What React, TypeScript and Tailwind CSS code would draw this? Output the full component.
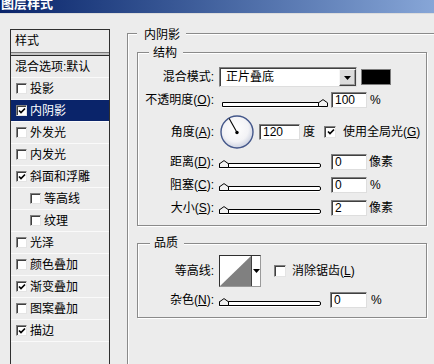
import React from "react";

function Check({ checked, small }: { checked?: boolean; small?: boolean }) {
  return (
    <span
      className={
        (small ? "w-[11px] h-[11px] " : "w-[12px] h-[12px] ") +
        "flex shrink-0 items-center justify-center bg-white border border-t-[#808080] border-l-[#808080] border-b-[#e4e4e4] border-r-[#e4e4e4] shadow-[inset_1px_1px_0_#404040]"
      }
    >
      {checked && (
        <svg width="8" height="8" viewBox="0 0 8 8" className="ml-[1px] mt-[1px]">
          <polyline points="1,3.5 3,5.5 7,1.5" fill="none" stroke="#000" strokeWidth="1.7" />
        </svg>
      )}
    </span>
  );
}

function Input({ value, w }: { value: string; w: "w36" | "w41" | "w37" }) {
  const wc = w === "w36" ? "w-[36px]" : w === "w41" ? "w-[41px]" : "w-[37px]";
  return (
    <div
      className={
        wc +
        " h-[16px] shrink-0 bg-white border border-t-[#808080] border-l-[#808080] border-b-[#dedede] border-r-[#dedede] shadow-[inset_1px_1px_0_#404040] pl-[3px] text-[12px] leading-[14px] text-black"
      }
    >
      {value}
    </div>
  );
}

function Thumb() {
  return (
    <svg width="10" height="8" viewBox="0 0 10 8">
      <path d="M0.5,7.5 L0.5,3.8 L5,0.6 L9.5,3.8 L9.5,7.5 Z" fill="#f2f2f2" stroke="#000" strokeWidth="1" />
    </svg>
  );
}

function Slider({ right }: { right?: boolean }) {
  if (right) {
    return (
      <div className="relative w-[106px] h-[10px] mt-[3px] shrink-0 flex items-end">
        <div className="w-[100px] h-[5px] border border-black bg-white rounded-r-[2px] shadow-[0_1px_0_#ffffff]" />
        <div className="absolute right-0 bottom-0 flex">
          <Thumb />
        </div>
      </div>
    );
  }
  return (
    <div className="relative w-[102px] h-[10px] mt-[3px] shrink-0 flex items-end">
      <div className="w-full h-[5px] border border-black bg-white rounded-r-[2px] shadow-[0_1px_0_#ffffff]" />
      <div className="absolute left-0 bottom-0 flex">
        <Thumb />
      </div>
    </div>
  );
}

function Label({ children }: { children: React.ReactNode }) {
  return (
    <div className="w-[76px] shrink-0 text-right whitespace-nowrap text-[12px] leading-[14px]">{children}</div>
  );
}

function U({ c }: { c: string }) {
  return <span className="underline underline-offset-[1px]">{c}</span>;
}

function Dial() {
  return (
    <svg width="34" height="34" viewBox="0 0 34 34" className="shrink-0">
      <defs>
        <radialGradient id="dialg" cx="45%" cy="40%" r="62%">
          <stop offset="0" stopColor="#ffffff" />
          <stop offset="0.65" stopColor="#f3f3f6" />
          <stop offset="1" stopColor="#c9cfdf" />
        </radialGradient>
      </defs>
      <circle cx="17" cy="17" r="16" fill="url(#dialg)" stroke="#44578a" strokeWidth="1.4" />
      <line x1="17" y1="17.5" x2="9.2" y2="3.5" stroke="#000" strokeWidth="1.1" />
      <circle cx="17" cy="17.5" r="1.7" fill="#000" />
    </svg>
  );
}

function DownTri() {
  return (
    <svg width="7" height="4" viewBox="0 0 7 4">
      <polygon points="0,0 7,0 3.5,4" fill="#000" />
    </svg>
  );
}

const listItems: { t: string; c?: boolean; ind?: boolean; sel?: boolean }[] = [
  { t: "投影" },
  { t: "内阴影", c: true, sel: true },
  { t: "外发光" },
  { t: "内发光" },
  { t: "斜面和浮雕", c: true },
  { t: "等高线", ind: true },
  { t: "纹理", ind: true },
  { t: "光泽" },
  { t: "颜色叠加" },
  { t: "渐变叠加", c: true },
  { t: "图案叠加" },
  { t: "描边", c: true },
];

export default function App() {
  return (
    <div className="w-[434px] h-[364px] overflow-hidden bg-[#ececec] text-black [font-family:'Liberation_Sans','Noto_Sans_CJK_SC',sans-serif] text-[12px] leading-[14px]">
      {/* title bar */}
      <div className="h-[13px] overflow-hidden bg-gradient-to-r from-[#0a246a] to-[#87a6d7]">
        <div className="mt-[-3px] pl-[1px] text-[13px] leading-[13px] font-bold text-white">图层样式</div>
      </div>
      <div className="h-[1px] bg-[#dcdcdc]" />

      <div className="flex h-[350px]">
        {/* left list */}
        <div className="ml-[10px] mt-[15px] w-[100px] h-[340px] shrink-0 border border-[#2f2f2f] border-b-0 flex flex-col">
          <div className="h-[22px] pl-[4px] flex items-center">样式</div>
          <div className="h-[4px] border-t border-[#7a7a7a] bg-[#c4c4c4] border-b border-b-[#2a2a2a]" />
          <div className="h-[22px] pl-[4px] flex items-center border-b border-[#fafafa] whitespace-nowrap">混合选项:默认</div>
          {listItems.map((it) => (
            <div
              key={it.t}
              className={
                "h-[22px] flex items-center border-b border-[#fafafa] " +
                (it.ind ? "pl-[19px] " : "pl-[5px] ") +
                (it.sel ? "bg-[#0a246a] text-white" : "")
              }
            >
              <Check checked={it.c} small />
              <span className="ml-[3px]">{it.t}</span>
            </div>
          ))}
        </div>

        {/* right side outer group */}
        <div className="relative ml-[17px] mt-[19px] w-[330px] h-[340px] shrink-0 border-t border-l border-[#8a8a8a] shadow-[inset_1px_1px_0_#ffffff] pl-[9px] pt-[18px]">
          <div className="absolute top-[-6px] left-[9px] bg-[#ececec] pl-[7px] pr-[6px]">内阴影</div>

          {/* 结构 */}
          <div className="relative w-[290px] h-[174px] border border-[#8a8a8a] shadow-[inset_1px_1px_0_#ffffff,1px_1px_0_#ffffff] pt-[14px] flex flex-col">
            <div className="absolute top-[-7px] left-[11px] bg-[#ececec] pl-[4px] pr-[6px]">结构</div>

            <div className="h-[20px] flex items-center">
              <Label>混合模式:</Label>
              <div className="ml-[5px] w-[138px] h-[20px] flex bg-white border border-t-[#808080] border-l-[#808080] border-b-[#dedede] border-r-[#dedede] shadow-[inset_1px_1px_0_#404040]">
                <span className="flex-1 pl-[6px] pt-[2px] leading-[14px]">正片叠底</span>
                <span className="w-[17px] h-[17px] mt-[1px] flex items-center justify-center bg-[#dcdcdc] border border-t-[#f6f6f6] border-l-[#f6f6f6] border-b-[#404040] border-r-[#404040] shadow-[inset_-1px_-1px_0_#9a9a9a]">
                  <DownTri />
                </span>
              </div>
              <div className="ml-[4px] w-[30px] h-[16px] bg-black border border-[#7c7c7c]" />
            </div>

            <div className="mt-[4px] h-[18px] flex items-center">
              <Label>
                不透明度(<U c="O" />):
              </Label>
              <div className="ml-[8px] flex">
                <Slider right />
              </div>
              <div className="ml-[3px]">
                <Input value="100" w="w36" />
              </div>
              <span className="ml-[3px]">%</span>
            </div>

            <div className="mt-[5px] h-[35px] flex items-center">
              <Label>
                角度(<U c="A" />):
              </Label>
              <div className="ml-[6px] flex">
                <Dial />
              </div>
              <div className="ml-[5px]">
                <Input value="120" w="w41" />
              </div>
              <span className="ml-[3px]">度</span>
              <div className="ml-[9px]">
                <Check checked />
              </div>
              <span className="ml-[7px] whitespace-nowrap">
                使用全局光(<U c="G" />)
              </span>
            </div>

            <div className="mt-[3px] h-[19px] flex items-center">
              <Label>
                距离(<U c="D" />):
              </Label>
              <div className="ml-[5px] flex">
                <Slider />
              </div>
              <div className="ml-[10px]">
                <Input value="0" w="w36" />
              </div>
              <span className="ml-[2px]">像素</span>
            </div>

            <div className="mt-[4px] h-[19px] flex items-center">
              <Label>
                阻塞(<U c="C" />):
              </Label>
              <div className="ml-[5px] flex">
                <Slider />
              </div>
              <div className="ml-[10px]">
                <Input value="0" w="w36" />
              </div>
              <span className="ml-[3px]">%</span>
            </div>

            <div className="mt-[4px] h-[19px] flex items-center">
              <Label>
                大小(<U c="S" />):
              </Label>
              <div className="ml-[5px] flex">
                <Slider />
              </div>
              <div className="ml-[10px]">
                <Input value="2" w="w36" />
              </div>
              <span className="ml-[2px]">像素</span>
            </div>
          </div>

          {/* 品质 */}
          <div className="relative mt-[17px] w-[290px] h-[75px] border border-[#8a8a8a] shadow-[inset_1px_1px_0_#ffffff,1px_1px_0_#ffffff] pt-[11px] flex flex-col">
            <div className="absolute top-[-8px] left-[12px] bg-[#ececec] pl-[4px] pr-[6px]">品质</div>

            <div className="h-[32px] flex items-center">
              <Label>等高线:</Label>
              <div className="ml-[5px] w-[42px] h-[32px] flex bg-white border border-t-[#303030] border-l-[#303030] border-b-[#9a9a9a] border-r-[#9a9a9a]">
                <svg width="31" height="30" viewBox="0 0 31 30" className="shrink-0">
                  <polygon points="0,30 31,0 31,30" fill="#808080" />
                </svg>
                <div className="flex-1 border-l border-[#404040] flex items-center justify-center">
                  <DownTri />
                </div>
              </div>
              <div className="ml-[13px]">
                <Check />
              </div>
              <span className="ml-[6px] whitespace-nowrap">
                消除锯齿(<U c="L" />)
              </span>
            </div>

            <div className="mt-[4px] h-[17px] flex items-center">
              <Label>
                杂色(<U c="N" />):
              </Label>
              <div className="ml-[5px] flex">
                <Slider />
              </div>
              <div className="ml-[9px]">
                <Input value="0" w="w37" />
              </div>
              <span className="ml-[4px]">%</span>
            </div>
          </div>
        </div>
      </div>
    </div>
  );
}
